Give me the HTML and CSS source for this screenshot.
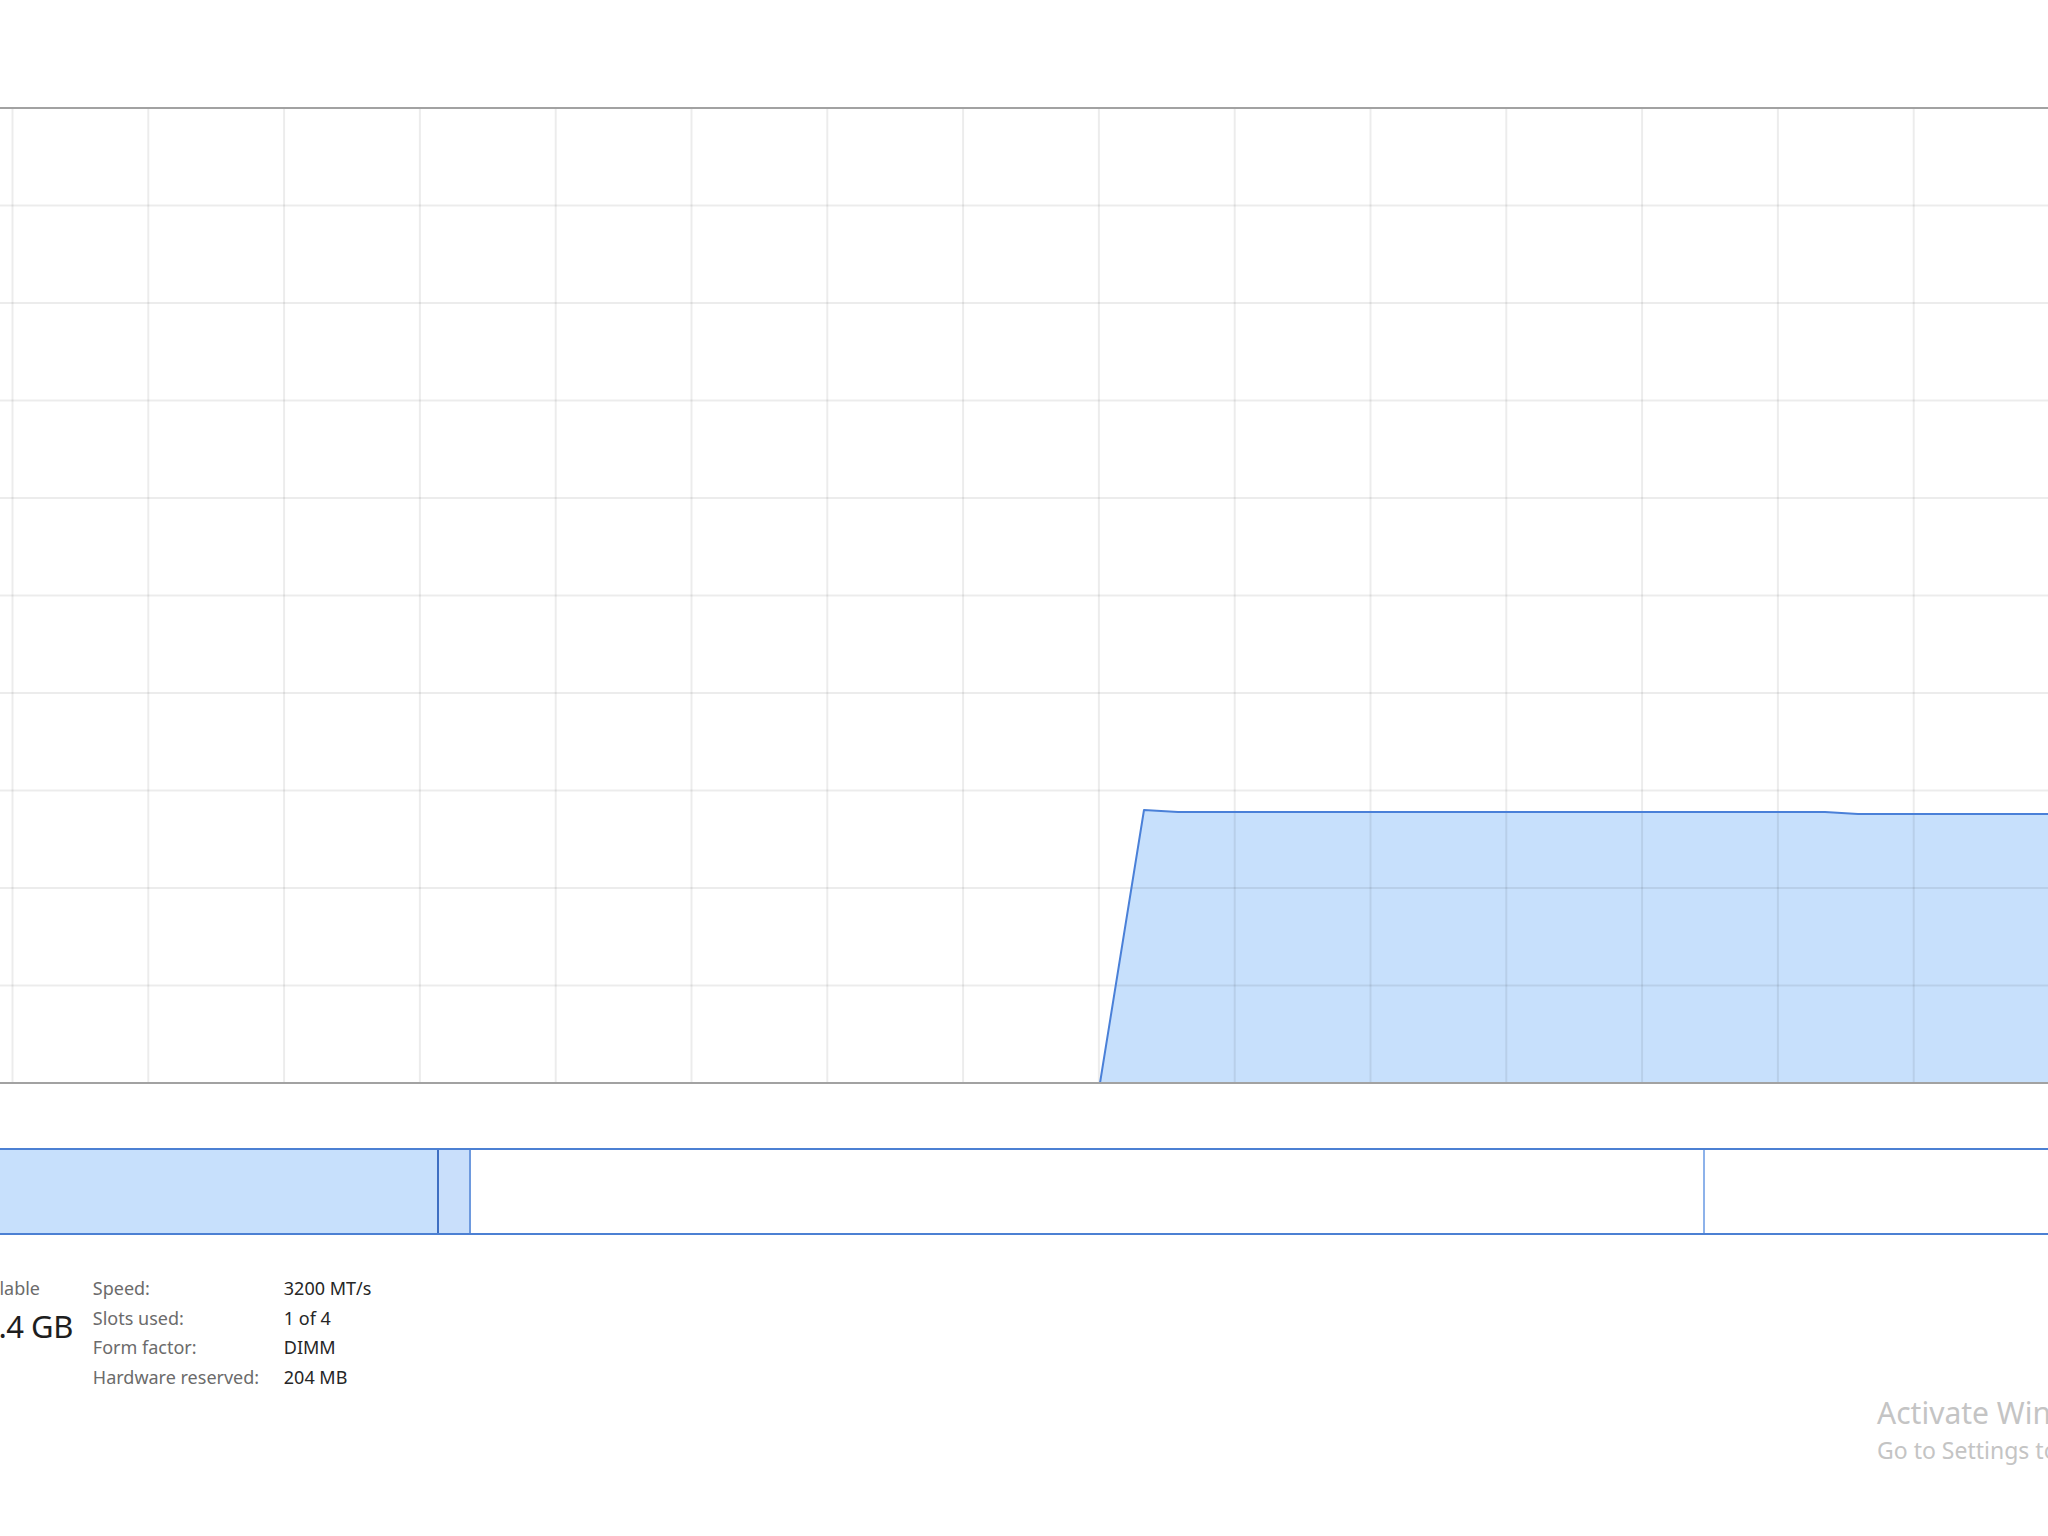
FILE: index.html
```html
<!DOCTYPE html>
<html lang="en">
<head>
<meta charset="utf-8">
<title>Memory</title>
<link rel="stylesheet" href="styles.css">
</head>
<body>
<main class="perf">
  <svg class="graph" viewBox="0 0 2048 984" width="2048" height="984" aria-label="Memory usage">
    <!-- usage area -->
    <polygon class="usage-fill" points="1100,981 1144,708 1178,710 1825,710 1858,712 2050,712 2050,981"/>
    <!-- grid: 10 rows, columns every 135.8px -->
    <g class="grid">
      <line x1="0" x2="2048" y1="103.5" y2="103.5"/>
      <line x1="0" x2="2048" y1="201" y2="201"/>
      <line x1="0" x2="2048" y1="298.5" y2="298.5"/>
      <line x1="0" x2="2048" y1="396" y2="396"/>
      <line x1="0" x2="2048" y1="493.5" y2="493.5"/>
      <line x1="0" x2="2048" y1="591" y2="591"/>
      <line x1="0" x2="2048" y1="688.5" y2="688.5"/>
      <line x1="0" x2="2048" y1="786" y2="786"/>
      <line x1="0" x2="2048" y1="883.5" y2="883.5"/>
      <line x1="12.5" x2="12.5" y1="7" y2="980"/>
      <line x1="148.3" x2="148.3" y1="7" y2="980"/>
      <line x1="284.1" x2="284.1" y1="7" y2="980"/>
      <line x1="419.9" x2="419.9" y1="7" y2="980"/>
      <line x1="555.7" x2="555.7" y1="7" y2="980"/>
      <line x1="691.5" x2="691.5" y1="7" y2="980"/>
      <line x1="827.3" x2="827.3" y1="7" y2="980"/>
      <line x1="963.1" x2="963.1" y1="7" y2="980"/>
      <line x1="1098.9" x2="1098.9" y1="7" y2="980"/>
      <line x1="1234.7" x2="1234.7" y1="7" y2="980"/>
      <line x1="1370.5" x2="1370.5" y1="7" y2="980"/>
      <line x1="1506.3" x2="1506.3" y1="7" y2="980"/>
      <line x1="1642.1" x2="1642.1" y1="7" y2="980"/>
      <line x1="1777.9" x2="1777.9" y1="7" y2="980"/>
      <line x1="1913.7" x2="1913.7" y1="7" y2="980"/>
    </g>
    <polyline class="usage-line" points="1100,981 1144,708 1178,710 1825,710 1858,712 2050,712"/>
    <line class="frame" x1="0" x2="2048" y1="6" y2="6"/>
    <line class="frame" x1="0" x2="2048" y1="981" y2="981"/>
  </svg>

  <div class="composition">
    <div class="seg seg-inuse" style="width:439px"></div>
    <div class="seg seg-modified" style="width:32px"></div>
    <div class="seg seg-standby" style="width:1234px"></div>
    <div class="seg seg-free"></div>
  </div>

  <section class="details">
    <div class="avail">
      <div class="stat-label">Available</div>
      <div class="stat-value">11.4 GB</div>
    </div>
    <dl class="specs">
      <dt>Speed:</dt><dd>3200 MT/s</dd>
      <dt>Slots used:</dt><dd>1 of 4</dd>
      <dt>Form factor:</dt><dd>DIMM</dd>
      <dt>Hardware reserved:</dt><dd>204 MB</dd>
    </dl>
  </section>
</main>

<div class="watermark">
  <div class="wm-title">Activate Windows</div>
  <div class="wm-sub">Go to Settings to activate Windows.</div>
</div>
</body>
</html>
```

FILE: styles.css
```css
html, body {
  margin: 0;
  padding: 0;
}

body {
  width: 2048px;
  height: 1536px;
  overflow: hidden;
  background: #ffffff;
  font-family: "Noto Sans", "Open Sans", sans-serif;
  position: relative;
}

.perf {
  padding-top: 102px;
}

/* ---- usage graph ---- */
.graph {
  display: block;
}

.usage-fill {
  fill: #c7e0fc;
}

.grid line {
  stroke: rgba(0, 0, 0, 0.075);
  stroke-width: 2;
}

.usage-line {
  fill: none;
  stroke: #4a80d8;
  stroke-width: 2;
  stroke-linejoin: round;
}

.frame {
  stroke: #a2a2a2;
  stroke-width: 2;
}

/* ---- memory composition bar ---- */
.composition {
  display: flex;
  margin-top: 62px;
  height: 87px;
  box-sizing: border-box;
  border-top: 2px solid #4c80d3;
  border-bottom: 2px solid #4c80d3;
}

.seg {
  box-sizing: border-box;
  height: 100%;
  flex: 0 0 auto;
}

.seg-inuse {
  background: #c7e0fc;
  border-right: 2px solid #3e6fc2;
}

.seg-modified {
  background: #c9dffb;
  border-right: 2px solid #6e9ade;
}

.seg-standby {
  background: #ffffff;
  border-right: 2px solid #8db2ea;
}

.seg-free {
  flex: 1 1 auto;
  background: #ffffff;
}

/* ---- details ---- */
.details {
  display: flex;
  margin-top: 39px;
  gap: 20px;
}

.avail {
  margin-left: -36px;
  flex: 0 0 108px;
  white-space: nowrap;
}

.stat-label {
  font-size: 18px;
  line-height: 29.7px;
  color: #6b6b6b;
}

.stat-value {
  margin-top: 2px;
  font-size: 31px;
  line-height: 40px;
  letter-spacing: -0.5px;
  color: #1e1e1e;
}

.specs {
  margin: 0;
  display: grid;
  grid-template-columns: 191px auto;
  font-size: 18px;
  line-height: 29.7px;
}

.specs dt {
  color: #6b6b6b;
}

.specs dd {
  margin: 0;
  color: #262626;
}

/* ---- activation notice ---- */
.watermark {
  position: absolute;
  left: 1877px;
  top: 1395px;
  white-space: nowrap;
  color: #c4c4c4;
}

.wm-title {
  font-size: 30px;
  line-height: 35px;
}

.wm-sub {
  margin-top: 3px;
  font-size: 23px;
  line-height: 35px;
}
```
